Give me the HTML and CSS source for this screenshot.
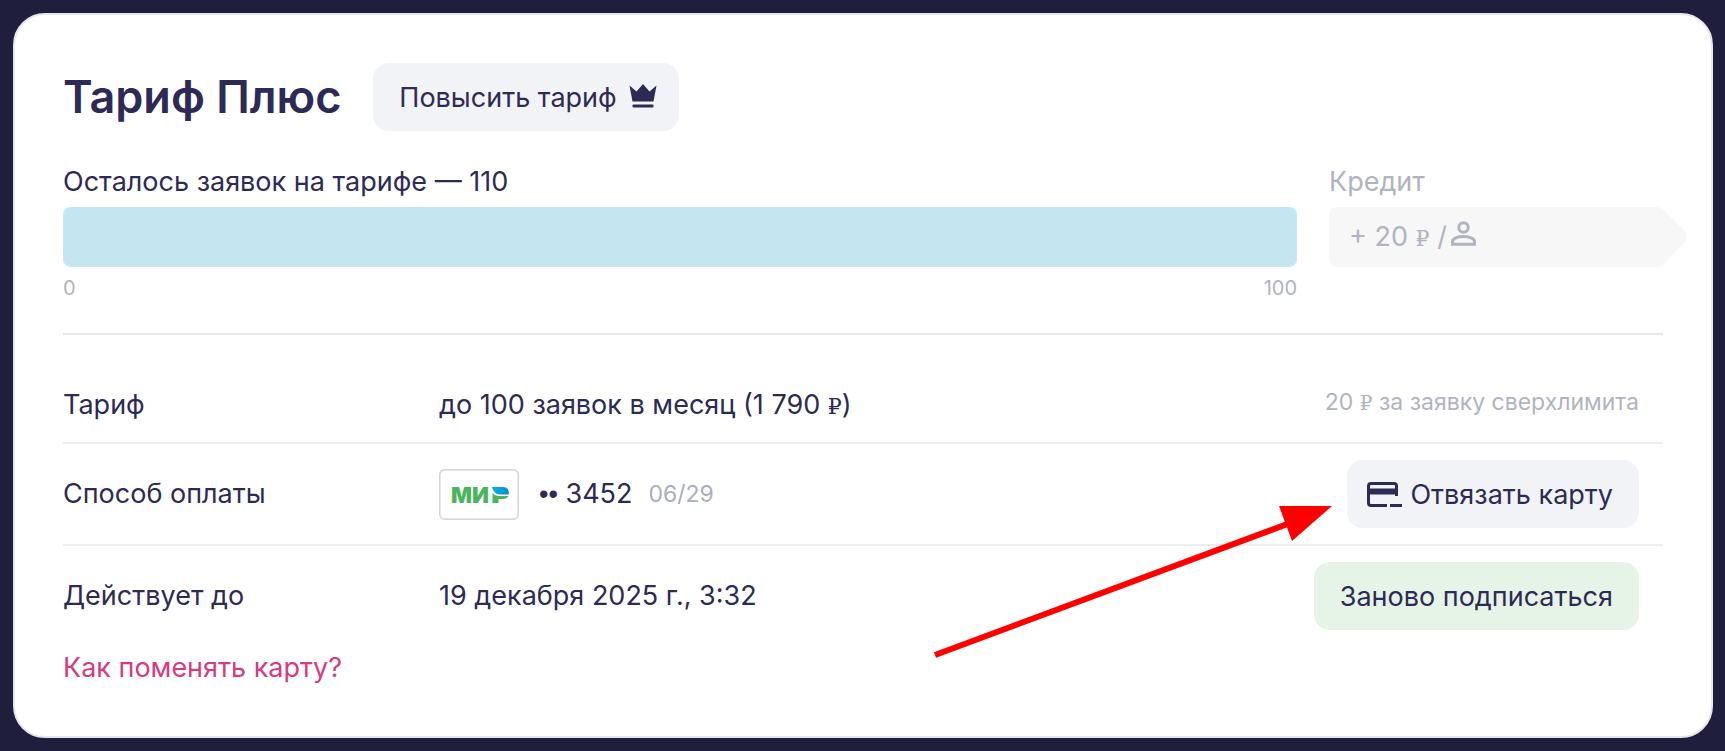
FILE: index.html
```html
<!DOCTYPE html>
<html lang="ru">
<head>
  <meta charset="utf-8">
  <title>Тариф Плюс</title>
  <meta name="viewport" content="width=device-width, initial-scale=1">
  <link rel="stylesheet" href="styles.css">
</head>
<body>
  <main class="card">
    <div class="header">
      <h1>Тариф Плюс</h1>
      <button class="button upgrade" type="button">
        Повысить тариф
        <svg class="crown" width="28" height="24" viewBox="0 0 28 24" fill="currentColor" aria-hidden="true">
          <path d="M0.5 1.5 L7.5 7.5 L14 0 L20.5 7.5 L27.5 1.5 L24.5 17.5 H3.5 Z"/>
          <rect x="3.5" y="20.5" width="21" height="3" rx="1"/>
        </svg>
      </button>
    </div>

    <div class="usage">
      <section class="limit">
        <p class="label">Осталось заявок на тарифе — 110</p>
        <div class="bar"></div>
        <div class="scale"><span>0</span><span>100</span></div>
      </section>
      <section class="credit">
        <p class="label">Кредит</p>
        <div class="credit-bar">
          <div class="credit-body">
            <span>+ 20 <span class="rub">₽</span> /</span>
            <svg class="person" width="25" height="25" viewBox="0 0 25 25" fill="none" stroke="currentColor" stroke-width="3" aria-hidden="true">
              <circle cx="12.5" cy="6.5" r="4.7"/>
              <path d="M1.5 23.2 V20.5 C1.5 17.5 7 15.5 12.5 15.5 S23.5 17.5 23.5 20.5 V23.2 Z"/>
            </svg>
          </div>
          <svg class="tip" width="32" height="60" viewBox="0 0 32 60" aria-hidden="true">
            <path d="M0 0 C5 0 8 2 11 5 L29 24 Q34 30 29 36 L11 55 C8 58 5 60 0 60 Z"/>
          </svg>
        </div>
      </section>
    </div>

    <hr>

    <table class="details">
      <tr class="plan">
        <th scope="row">Тариф</th>
        <td>до 100 заявок в месяц (1 790 <span class="rub">₽</span>)</td>
        <td class="action note">20 <span class="rub">₽</span> за заявку сверхлимита</td>
      </tr>
      <tr>
        <th scope="row">Способ оплаты</th>
        <td>
          <div class="payment">
            <svg class="mir" width="80" height="51" viewBox="0 0 80 51" role="img" aria-label="Мир">
              <defs>
                <linearGradient id="wing" x1="0" x2="1">
                  <stop offset="0" stop-color="#00b4e6"/>
                  <stop offset="1" stop-color="#088cd0"/>
                </linearGradient>
              </defs>
              <rect x="0.75" y="0.75" width="78.5" height="49.5" rx="5" fill="#fff" stroke="#d3d3d9" stroke-width="1.5"/>
              <text class="mir-text" x="12" y="34">МИ</text>
              <path d="M53.5 24 C55 26 57 27 60 27 H69.5 C68.5 29 66.5 30 64 30 H59.5 V34 H53.5 Z" fill="#4db45e"/>
              <path d="M53 18 H64 C68 18 70.5 21 69.7 25.5 H61 C57 25.5 54 22.5 53 18 Z" fill="url(#wing)"/>
            </svg>
            <span class="number"><span class="dots">••</span> 3452</span>
            <span class="expiry">06/29</span>
          </div>
        </td>
        <td class="action">
          <div class="pointed">
            <button class="button unlink" type="button">
              <svg width="35" height="26" viewBox="0 0 35 26" fill="none" stroke="currentColor" stroke-width="3" aria-hidden="true">
                <path d="M20 23.5 H4 Q1.5 23.5 1.5 21 V4 Q1.5 1.5 4 1.5 H27 Q29.5 1.5 29.5 4 V14"/>
                <path d="M1.5 9.5 H29.5" stroke-width="6"/>
                <path d="M23 23.5 H35"/>
              </svg>
              Отвязать карту
            </button>
            <!-- red pointer to the unlink button -->
            <svg class="arrow" width="398" height="153" viewBox="0 0 398 153" aria-hidden="true">
              <path d="M1 150 L356 18" stroke="#f00" stroke-width="6"/>
              <path d="M345 1 H398 L358 36 Z" fill="#f00"/>
            </svg>
          </div>
        </td>
      </tr>
      <tr>
        <th scope="row">Действует до</th>
        <td>19 декабря 2025 г., 3:32</td>
        <td class="action"><button class="button green" type="button">Заново подписаться</button></td>
      </tr>
    </table>

    <a class="help" href="#">Как поменять карту?</a>
  </main>
</body>
</html>
```
FILE: styles.css
```css
* {
  box-sizing: border-box;
}
body {
  margin: 0;
  padding: 13px 12px 13px 13px;
  background: #1f1f3d;
  color: #2d2b55;
  font-family: Inter, "Liberation Sans", sans-serif;
  font-size: 27px;
  line-height: 40px;
}
.card {
  padding: 48px;
  background: #fff;
  border: 2px solid #e6e6eb;
  border-radius: 32px;
}
.header {
  display: flex;
  align-items: center;
  gap: 32px;
  margin-bottom: 31px;
}
h1 {
  margin: 0;
  font-size: 45px;
  font-weight: 600;
  line-height: 60px;
}
.button {
  display: inline-flex;
  align-items: center;
  gap: 8px;
  height: 68px;
  padding: 1px 26px 0;
  border: none;
  border-radius: 16px;
  background: #f2f3f6;
  color: inherit;
  font: inherit;
  white-space: nowrap;
  cursor: pointer;
}
.upgrade {
  gap: 12px;
  padding-right: 22px;
}
.crown {
  margin-bottom: 3px;
}
.unlink {
  padding-left: 20px;
}
.green {
  background: #e6f4e7;
}
.usage {
  display: flex;
  gap: 32px;
  margin-right: -24px;
}
.limit {
  flex: 1;
}
.credit {
  width: 358px;
  color: #b0b4bf;
}
.label {
  margin: 0 0 5px;
}
.bar {
  height: 60px;
  border-radius: 8px;
  background: #c5e6f0;
}
.scale {
  display: flex;
  justify-content: space-between;
  margin-top: 7px;
  color: #b0b4bf;
  font-size: 20px;
  line-height: 28px;
}
.credit-bar {
  display: flex;
}
.credit-body {
  display: flex;
  flex: 1;
  align-items: center;
  gap: 4px;
  height: 60px;
  padding-left: 20px;
  border-radius: 8px 0 0 8px;
  background: #f7f7f7;
}
.person {
  margin-bottom: 8px;
}
.tip {
  fill: #f7f7f7;
}
.rub {
  font-family: "DejaVu Serif", serif;
  font-size: 22px;
  line-height: 1;
}
hr {
  height: 2px;
  margin: 31px 0 12px;
  border: none;
  background: #e6e6e8;
}
.details {
  width: 100%;
  border-collapse: separate;
  border-spacing: 0;
}
.details th,
.details td {
  height: 102px;
  padding: 0;
  border-bottom: 2px solid #eeeeef;
  font-weight: 400;
  text-align: left;
}
.details th {
  width: 376px;
}
.details .plan th,
.details .plan td {
  height: auto;
  padding: 38px 0 17px;
  vertical-align: top;
}
.details tr:last-child th,
.details tr:last-child td {
  height: 100px;
  border-bottom: none;
}
.details .action,
.details .plan .action {
  padding-right: 24px;
  text-align: right;
}
.action .button {
  vertical-align: middle;
}
.details .note {
  color: #b0b4bf;
  font-size: 23px;
  line-height: 34px;
}
.note .rub {
  font-size: 20px;
}
.payment {
  display: flex;
  align-items: center;
}
.mir-text {
  fill: #4db45e;
  font-size: 22px;
  font-weight: 900;
}
.number {
  margin: 0 16px 0 20px;
}
.dots {
  font-family: "Liberation Sans", sans-serif;
}
.expiry {
  color: #a9aec0;
  font-size: 23px;
}
.pointed {
  display: inline-block;
  position: relative;
  vertical-align: middle;
}
.arrow {
  position: absolute;
  top: 45px;
  right: 100%;
  margin-right: 15px;
  pointer-events: none;
}
.help {
  display: block;
  margin-top: 2px;
  color: #d63a7f;
  text-decoration: none;
}
```
